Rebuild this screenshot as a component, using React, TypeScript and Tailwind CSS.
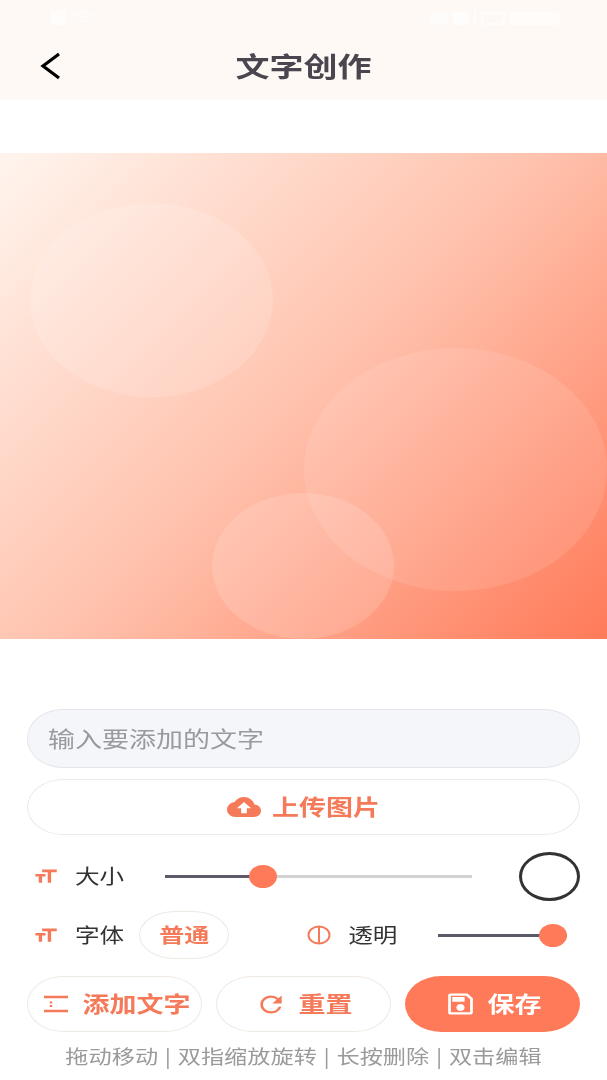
import React from "react";
import { MdCloudUpload, MdFormatSize, MdRefresh, MdOutlineSave } from "react-icons/md";

const CJK = "font-['Noto_Sans_CJK_SC','Noto_Sans',sans-serif]";

function T({ className = "", children }: { className?: string; children: React.ReactNode }) {
  return <span className={`inline-block -translate-y-[1px] scale-y-[0.81] whitespace-nowrap ${CJK} ${className}`}>{children}</span>;
}

function Slider({ className, fill, pct, light }: { className: string; fill: string; pct: string; light?: boolean }) {
  return (
    <div className={`relative h-[3px] ${light ? "bg-[#d2d2d2]" : "bg-[#5c5a68]"} ${className}`}>
      <div className={`h-full ${fill} bg-[#5c5a68]`} />
      <div className={`absolute top-[-10px] h-[23px] w-[28px] rounded-[50%] bg-[#ff7a59] ${pct}`} />
    </div>
  );
}

function SizeIcon() {
  return <MdFormatSize preserveAspectRatio="none" className="h-[21px] w-[27px] text-[#f47a5a]" />;
}

export default function App() {
  return (
    <div className="flex h-[1080px] w-[607px] flex-col overflow-hidden bg-white blur-[0.5px]">
      <header className="relative flex h-[100px] shrink-0 items-center justify-center bg-[#fef9f4] pt-[33px]">
        <div className="absolute left-[51px] top-[10px] flex items-center gap-[8px] opacity-70">
          <div className="h-[15px] w-[15px] rounded-[2px] bg-white" />
          <svg width="19" height="15" viewBox="0 0 19 15" fill="none" stroke="white" strokeWidth="2">
            <path d="M1 5q8.500-6 17 0M4 8.500q5.500-4 11 0M7 12q2.500-2 5 0" />
          </svg>
        </div>
        <div className="absolute left-[430px] top-[11px] flex items-center gap-[5px] opacity-70">
          <div className="h-[13px] w-[18px] rounded-[2px] bg-white/80" />
          <div className="h-[13px] w-[16px] rounded-[2px] bg-white" />
          <div className="h-[14px] w-[2px] bg-white" />
          <div className="h-[13px] w-[24px] border-2 border-white" />
          <div className="h-[13px] w-[50px] rounded-[2px] bg-white/80" />
        </div>
        <svg className="absolute left-[39px] top-[51px]" width="24" height="30" viewBox="0 0 24 30" fill="none" stroke="#000" strokeWidth="3.200">
          <path d="M20 3 L4 15 L20 27" />
        </svg>
        <T className="text-[34px] leading-[40px] font-bold text-[#4a4650]">文字创作</T>
      </header>

      <section className="relative mt-[53px] h-[486px] shrink-0 overflow-hidden bg-[linear-gradient(135deg,#fff5ee,#ffc2ad_50%,#ff7a59)]">
        <div className="absolute left-[30px] top-[50px] h-[194px] w-[243px] rounded-[50%] bg-white/15" />
        <div className="absolute left-[304px] top-[195px] h-[243px] w-[303px] rounded-[50%] bg-white/10" />
        <div className="absolute left-[212px] top-[340px] h-[146px] w-[182px] rounded-[50%] bg-white/15" />
      </section>

      <main className="flex flex-1 flex-col px-[27px] pt-[70px]">
        <div className="flex h-[59px] shrink-0 items-center rounded-[36px/29px] border border-[#e6e6ea] bg-[#f5f6fa] pl-[20px]">
          <T className="text-[27px] leading-[32px] text-[#9a9a9e]">输入要添加的文字</T>
        </div>

        <div className="mt-[11px] flex h-[56px] shrink-0 items-center justify-center gap-[11px] rounded-[36px/28px] border border-[#efe9e3] bg-white">
          <MdCloudUpload preserveAspectRatio="none" className="h-[30px] w-[34px] text-[#f47a5a]" />
          <T className="text-[27px] leading-[32px] font-bold text-[#f47a5a]">上传图片</T>
        </div>

        <div className="mt-[16px] flex h-[50px] shrink-0 items-center">
          <div className="ml-[5px] flex w-[133px] shrink-0 items-center gap-[16px]">
            <SizeIcon />
            <T className="text-[24.600px] leading-[30px] text-[#333]">大小</T>
          </div>
          <Slider className="w-[307px] shrink-0" fill="w-[98px]" pct="left-[84px]" light />
          <div className="ml-auto h-[49px] w-[61px] rounded-[50%] border-[3px] border-[#333] bg-white" />
        </div>

        <div className="mt-[10px] flex h-[48px] shrink-0 items-center">
          <div className="ml-[5px] flex shrink-0 items-center gap-[16px]">
            <SizeIcon />
            <T className="text-[24.600px] leading-[30px] text-[#333]">字体</T>
          </div>
          <div className="ml-[15px] flex h-[48px] w-[90px] shrink-0 items-center justify-center rounded-[36px/24px] border border-[#efe9e3]">
            <T className="text-[25px] leading-[30px] font-bold text-[#f47a5a]">普通</T>
          </div>
          <svg className="ml-[78px] shrink-0" width="24" height="20" viewBox="0 0 24 20" fill="none" stroke="#f47a5a" strokeWidth="2">
            <ellipse cx="12" cy="10" rx="10.500" ry="8.500" />
            <path d="M12 2v16" />
          </svg>
          <T className="ml-[17px] text-[24.600px] leading-[30px] text-[#333]">透明</T>
          <Slider className="ml-[41px] w-[129px] shrink-0" fill="w-full" pct="left-[101px]" />
        </div>

        <div className="mt-[17px] flex h-[56px] shrink-0 gap-[14px]">
          <div className="flex w-[175px] items-center justify-center gap-[14px] rounded-[36px/28px] border border-[#efe9e3] pl-[4px]">
            <svg width="26" height="18" viewBox="0 0 26 18" fill="none" stroke="#f47a5a" strokeWidth="2.500">
              <path d="M1 2h24M1 16h24" />
              <path d="M8 6.500v2M8 10v2" />
            </svg>
            <T className="text-[27px] leading-[32px] font-bold text-[#f47a5a]">添加文字</T>
          </div>
          <div className="flex w-[175px] items-center justify-center gap-[12px] rounded-[36px/28px] border border-[#efe9e3]">
            <MdRefresh preserveAspectRatio="none" className="h-[27px] w-[32px] text-[#f47a5a]" />
            <T className="text-[27px] leading-[32px] font-bold text-[#f47a5a]">重置</T>
          </div>
          <div className="flex w-[175px] items-center justify-center gap-[11px] rounded-[36px/28px] bg-[#ff7a59]">
            <MdOutlineSave preserveAspectRatio="none" className="h-[28px] w-[33px] text-white" />
            <T className="text-[27px] leading-[32px] font-bold text-white">保存</T>
          </div>
        </div>

        <div className="mt-[12px] flex justify-center">
          <T className="text-[23.200px] leading-[26px] text-[#9a9a9a] [word-spacing:1.5px]">拖动移动 | 双指缩放旋转 | 长按删除 | 双击编辑</T>
        </div>
      </main>
    </div>
  );
}
